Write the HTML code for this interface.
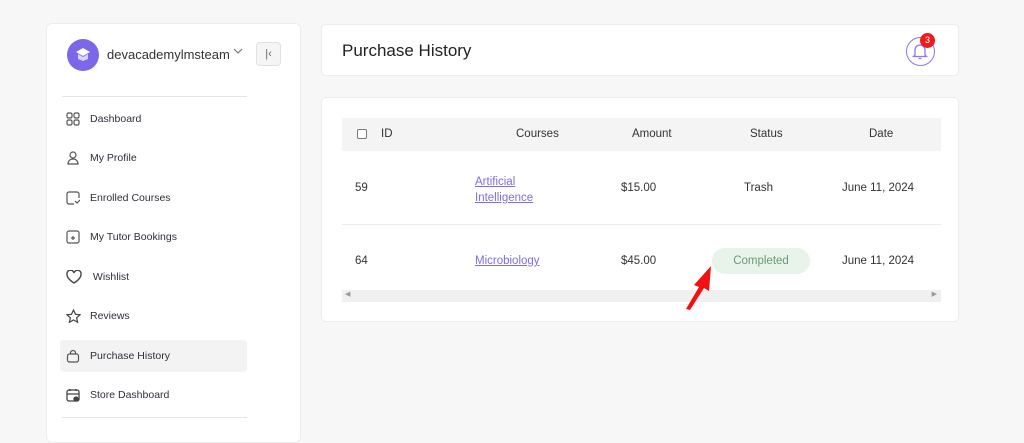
<!DOCTYPE html>
<html><head><meta charset="utf-8"><style>
*{box-sizing:border-box;margin:0;padding:0}
body{width:1024px;height:433px;background:#f7f7f8;font-family:"Liberation Sans",sans-serif;color:#2a2a2a;position:relative;overflow:hidden}
.side{position:absolute;left:46px;top:23px;width:255px;height:420px;background:#fff;border:1px solid #ececec;border-radius:6px}
.av{position:absolute;left:20px;top:15px;width:32px;height:32px;border-radius:50%;background:#7c67e8}
.name{position:absolute;left:60px;top:23px;font-size:13px;color:#333}
.chev{position:absolute;left:184px;top:20px}
.col{position:absolute;left:209px;top:18px;width:25px;height:24px;border:1px solid #e1e1e1;background:#f5f5f6;border-radius:4px;font-size:11px;color:#666;text-align:center;line-height:22px}
.hr{position:absolute;left:0;width:200px;height:1px;background:#e5e5e5}
.item{position:absolute;left:13px;width:187px;height:32px;border-radius:4px;font-size:10.5px;color:#2f2f3a;line-height:32px;padding-left:30px}
.item svg{position:absolute;left:6px;top:9px}
.act{background:#f3f3f3}
.card{position:absolute;left:321px;width:638px;background:#fff;border:1px solid #ececec;border-radius:5px}
h1{position:absolute;left:20px;top:16px;font-size:17px;font-weight:normal;color:#222}
.bell{position:absolute;left:584px;top:12px;width:29px;height:29px;border:1.5px solid #8a78ee;border-radius:50%}
.badge{position:absolute;left:598px;top:8px;width:15px;height:15px;border-radius:50%;background:#f01b1b;color:#fff;font-size:9px;text-align:center;line-height:15px}
.th{position:absolute;left:20px;top:20px;width:599px;height:33px;background:#f4f4f4}
.t{position:absolute;font-size:11.5px;color:#333;white-space:nowrap}
a{color:#7b6de8;text-decoration:underline}
.pill{position:absolute;left:390px;top:150px;width:98px;height:26px;border-radius:13px;background:#e8f3ea;color:#6b9a76;font-size:11.5px;text-align:center;line-height:26px}
.scroll{position:absolute;left:20px;top:192px;width:599px;height:12px;background:#f0f0f0}
</style></head><body>
<div class="side">
 <div class="av"><svg width="32" height="32"><path d="M16 9l7 4-7 4-7-4z" fill="#fff"/><path d="M11 15v5l5 2 5-2v-5l-5 3z" fill="#d9d3fb"/></svg></div>
 <div class="name">devacademylmsteam</div>
 <svg class="chev" width="14" height="14" fill="none" stroke="#777" stroke-width="1.2"><path d="M3 5l4 4 4-4"/></svg>
 <div class="col">|&lsaquo;</div>
 <div class="hr" style="top:72px;left:15px;width:185px"></div>
 <div class="item" style="top:79px"><svg width="14" height="14" fill="none" stroke="#555" stroke-width="1.2"><rect x="1" y="1" width="5" height="5" rx="1.5"/><rect x="8" y="1" width="5" height="5" rx="1.5"/><rect x="1" y="8" width="5" height="5" rx="1.5"/><rect x="8" y="8" width="5" height="5" rx="1.5"/></svg>Dashboard</div>
 <div class="item" style="top:118px"><svg width="14" height="14" fill="none" stroke="#555" stroke-width="1.2"><circle cx="7" cy="4" r="3"/><path d="M2 13c0-3 2-5 5-5s5 2 5 5z"/></svg>My Profile</div>
 <div class="item" style="top:158px"><svg width="14" height="14" fill="none" stroke="#555" stroke-width="1.2"><path d="M8 13H3a2 2 0 01-2-2V3a2 2 0 012-2h8a2 2 0 012 2v4"/><path d="M9 10l2 2 3-3"/></svg>Enrolled Courses</div>
 <div class="item" style="top:197px"><svg width="14" height="14" fill="none" stroke="#555" stroke-width="1.2"><rect x="1" y="1" width="12" height="12" rx="2"/><path d="M7 6v4M5 8h4"/></svg>My Tutor Bookings</div>
 <div class="item" style="top:237px"><svg width="16" height="14" fill="none" stroke="#444" stroke-width="1.4"><path d="M8 13S1 9 1 4.5A3.3 3.3 0 018 3a3.3 3.3 0 017 1.5C15 9 8 13 8 13z"/></svg>&nbsp;Wishlist</div>
 <div class="item" style="top:276px"><svg width="15" height="15" fill="none" stroke="#444" stroke-width="1.2"><path d="M7.5 1l2 4.3 4.5.5-3.4 3 1 4.5-4.1-2.4-4.1 2.4 1-4.5-3.4-3 4.5-.5z"/></svg>Reviews</div>
 <div class="item act" style="top:316px"><svg width="14" height="14" fill="none" stroke="#555" stroke-width="1.2"><rect x="1.5" y="5" width="11" height="8" rx="2"/><path d="M4.5 5V4a2.5 2.5 0 015 0v1"/></svg>Purchase History</div>
 <div class="item" style="top:355px"><svg width="14" height="14" fill="none" stroke="#444" stroke-width="1.3"><rect x="1" y="2" width="12" height="11" rx="2"/><path d="M1 6h12M4 1v2M10 1v2"/><circle cx="10" cy="11" r="2" fill="#444"/></svg>Store Dashboard</div>
 <div class="hr" style="top:393px;left:15px;width:185px"></div>
</div>
<div class="card" style="top:24px;height:52px">
 <h1>Purchase History</h1>
 <div class="bell"><svg width="26" height="26" fill="none" stroke="#8a78ee" stroke-width="1.3"><path d="M8 17V12a5 5 0 0110 0v5l1.5 1.5h-13z"/><path d="M11.5 20.5h3"/></svg></div>
 <div class="badge">3</div>
</div>
<div class="card" style="top:97px;height:225px">
 <div class="th"></div>
 <div style="position:absolute;left:35px;top:31px;width:10px;height:10px;border:1px solid #777;border-radius:2px;background:#fff"></div>
 <div class="t" style="left:59px;top:30px">ID</div>
 <div class="t" style="left:194px;top:30px">Courses</div>
 <div class="t" style="left:310px;top:30px">Amount</div>
 <div class="t" style="left:428px;top:30px">Status</div>
 <div class="t" style="left:547px;top:30px">Date</div>
 <div class="t" style="left:33px;top:84px">59</div>
 <div class="t" style="left:153px;top:76px;line-height:16px"><a>Artificial</a><br><a>Intelligence</a></div>
 <div class="t" style="left:299px;top:84px">$15.00</div>
 <div class="t" style="left:422px;top:84px">Trash</div>
 <div class="t" style="left:520px;top:84px">June 11, 2024</div>
 <div style="position:absolute;left:20px;top:126px;width:599px;height:1px;background:#ebebeb"></div>
 <div class="t" style="left:33px;top:157px">64</div>
 <div class="t" style="left:153px;top:157px"><a>Microbiology</a></div>
 <div class="t" style="left:299px;top:157px">$45.00</div>
 <div class="pill">Completed</div>
 <div class="t" style="left:520px;top:157px">June 11, 2024</div>
 <div class="scroll"><span style="position:absolute;left:3px;top:0;font-size:7px;color:#999">&#9664;</span><span style="position:absolute;right:4px;top:0;font-size:7px;color:#999">&#9654;</span></div>
</div>
<svg style="position:absolute;left:684px;top:264px" width="32" height="48"><path d="M2 45l13-22-5-2 17-19-2 25-5-3-14 22z" fill="#f21010"/></svg>
</body></html>
